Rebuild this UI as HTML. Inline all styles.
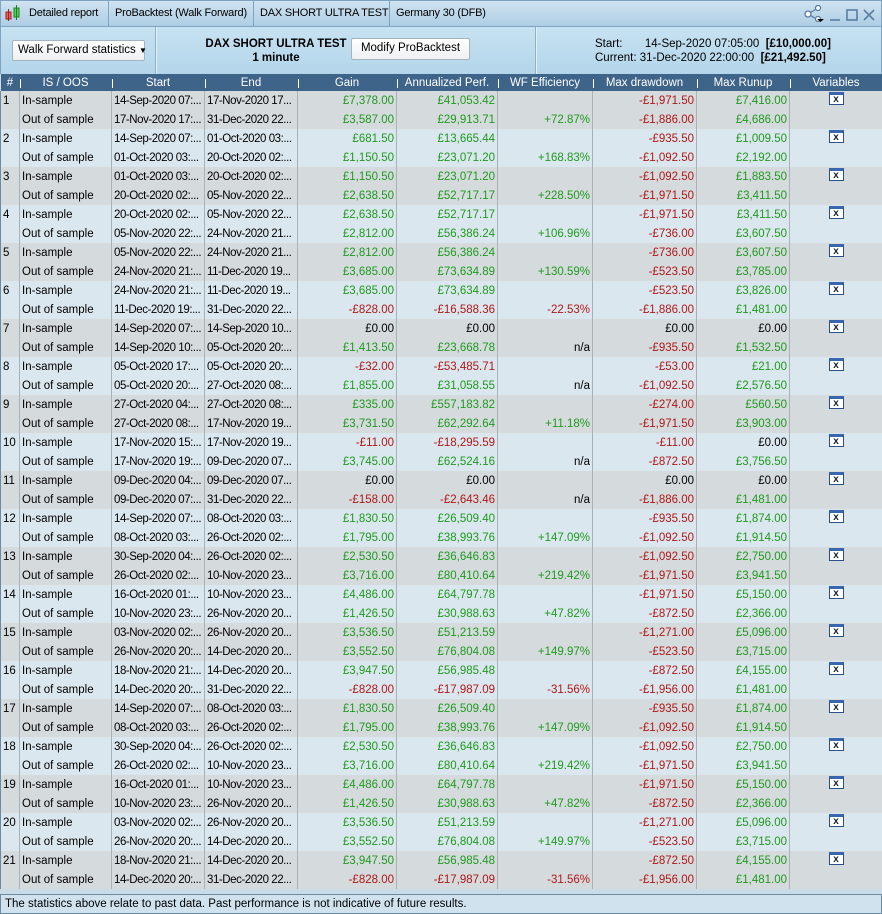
<!DOCTYPE html>
<html><head><meta charset="utf-8"><style>
*{box-sizing:border-box;margin:0;padding:0}
body{width:882px;height:914px;overflow:hidden;font-family:"Liberation Sans",Arial,sans-serif;font-size:11px;color:#000;background:#c9dbe6;position:relative}
#tb{position:absolute;left:0;top:0;width:882px;height:27px;background:linear-gradient(#cfe3f1,#aecde4);border:1px solid #7fa3c0}
#tb .t{position:absolute;top:0;height:25px;line-height:25px;border-right:1px solid #7fa3c0;padding-left:6px;white-space:nowrap;font-size:11px;letter-spacing:-0.2px;overflow:hidden}
#bar{position:absolute;left:0;top:27px;width:882px;height:47px;background:linear-gradient(#c7e2f2,#b3d5ea);border-left:1px solid #7fa3c0;border-right:1px solid #7fa3c0}
.sep{position:absolute;top:0;width:2px;height:47px;border-left:1px solid #8fb0c8;border-right:1px solid #e5f1f8}
.btn{position:absolute;background:linear-gradient(#fff,#eef0f2);border:1px solid #a5b3bf;border-radius:2px;text-align:center;line-height:19px;white-space:nowrap;font-size:11.5px}
table{position:absolute;left:0;top:74px;border-collapse:collapse;table-layout:fixed;width:882px}
th{background:#3e648a;color:#fff;font-weight:normal;height:17px;padding:0;text-align:center;position:relative;white-space:nowrap;font-size:11.5px}
th+th:before{content:"";position:absolute;left:0;top:5px;height:9px;border-left:1px solid #fff}
td{height:19px;padding:0 2px;white-space:nowrap;overflow:hidden;border-left:1px solid #a8b2b8;font-size:11.5px}
td:nth-child(3),td:nth-child(4){font-size:11.5px;letter-spacing:-0.45px;padding-left:2px}
td:first-child{border-left:1px solid #6d8aa3;padding-left:2px}
td:last-child{border-right:1px solid #6d8aa3}
tr.a td{background:#d5dadd}tr.b td{background:#dbe7ee}
.r{text-align:right}.g{color:#1f9a1f}.d{color:#b01818}.c{text-align:center}
.x{display:inline-block;width:15px;height:13px;border:1px solid #2a4f8a;border-top:3px solid #3a66b0;background:#fff;font-size:10px;line-height:9px;color:#123;font-weight:bold;vertical-align:middle;text-align:center;margin-top:-3px}
#ft{position:absolute;left:0;top:894px;width:882px;height:20px;background:#cfe2ee;border:1px solid #6d8aa3;padding-left:4px;line-height:18px;font-size:11.5px}
</style></head><body>
<div id="tb">
<svg style="position:absolute;left:4px;top:4px" width="16" height="17"><rect x="1" y="7" width="5" height="7" fill="#f06060" stroke="#a02020"/><line x1="3.5" y1="4" x2="3.5" y2="16" stroke="#a02020"/><rect x="9" y="3" width="5" height="9" fill="#50d050" stroke="#208020"/><line x1="11.5" y1="0" x2="11.5" y2="15" stroke="#208020"/></svg>
<div class="t" style="left:22px;width:86px">Detailed report</div>
<div class="t" style="left:108px;width:145px">ProBacktest (Walk Forward)</div>
<div class="t" style="left:253px;width:136px">DAX SHORT ULTRA TEST</div>
<div class="t" style="left:389px;border:none">Germany 30 (DFB)</div>
<svg style="position:absolute;left:803px;top:4px" width="76" height="18"><g stroke="#5a7ea0" fill="#fff" stroke-width="1.3"><line x1="4" y1="9" x2="14" y2="3"/><line x1="4" y1="9" x2="14" y2="15"/><circle cx="4" cy="9" r="3"/><circle cx="14" cy="3" r="2.5"/><circle cx="14" cy="14" r="2.5"/></g><path d="M13 14h7l-3.5 3z" fill="#000"/><g stroke="#5a7ea0" stroke-width="1.6" fill="none"><line x1="26" y1="15" x2="36" y2="15"/><rect x="43" y="5" width="10" height="10"/><path d="M60 5l10 10M70 5l-10 10"/></g></svg>
</div>
<div id="bar">
<div class="btn" style="left:11px;top:13px;width:133px;height:21px;text-align:left;padding-left:5px">Walk Forward statistics <span style="font-size:8px">&#9660;</span></div>
<div class="sep" style="left:154px"></div>
<div style="position:absolute;left:195px;top:10px;width:160px;text-align:center;font-weight:bold;line-height:14px;font-size:11.5px">DAX SHORT ULTRA TEST<br>1 minute</div>
<div class="btn" style="left:350px;top:11px;width:119px;height:22px">Modify ProBacktest</div>
<div class="sep" style="left:534px"></div>
<div style="position:absolute;left:594px;top:10px;line-height:14px;font-size:11.5px;white-space:nowrap">Start:&nbsp;&nbsp;&nbsp;&nbsp;&nbsp;&nbsp;&nbsp;14-Sep-2020 07:05:00 &nbsp;<b>[£10,000.00]</b><br>Current:&nbsp;31-Dec-2020 22:00:00 &nbsp;<b>[£21,492.50]</b></div>
</div>
<table>
<colgroup><col style="width:19px"><col style="width:92px"><col style="width:93px"><col style="width:93px"><col style="width:99px"><col style="width:101px"><col style="width:95px"><col style="width:104px"><col style="width:93px"><col style="width:93px"></colgroup>
<tr><th>#</th><th>IS / OOS</th><th>Start</th><th>End</th><th>Gain</th><th>Annualized Perf.</th><th>WF Efficiency</th><th>Max drawdown</th><th>Max Runup</th><th>Variables</th></tr>
<tr class="a"><td>1</td><td>In-sample</td><td>14-Sep-2020 07:...</td><td>17-Nov-2020 17...</td><td class="r g">£7,378.00</td><td class="r g">£41,053.42</td><td></td><td class="r d">-£1,971.50</td><td class="r g">£7,416.00</td><td class="c"><span class="x">x</span></td></tr>
<tr class="a"><td></td><td>Out of sample</td><td>17-Nov-2020 17:...</td><td>31-Dec-2020 22...</td><td class="r g">£3,587.00</td><td class="r g">£29,913.71</td><td class="r g">+72.87%</td><td class="r d">-£1,886.00</td><td class="r g">£4,686.00</td><td></td></tr>
<tr class="b"><td>2</td><td>In-sample</td><td>14-Sep-2020 07:...</td><td>01-Oct-2020 03:...</td><td class="r g">£681.50</td><td class="r g">£13,665.44</td><td></td><td class="r d">-£935.50</td><td class="r g">£1,009.50</td><td class="c"><span class="x">x</span></td></tr>
<tr class="b"><td></td><td>Out of sample</td><td>01-Oct-2020 03:...</td><td>20-Oct-2020 02:...</td><td class="r g">£1,150.50</td><td class="r g">£23,071.20</td><td class="r g">+168.83%</td><td class="r d">-£1,092.50</td><td class="r g">£2,192.00</td><td></td></tr>
<tr class="a"><td>3</td><td>In-sample</td><td>01-Oct-2020 03:...</td><td>20-Oct-2020 02:...</td><td class="r g">£1,150.50</td><td class="r g">£23,071.20</td><td></td><td class="r d">-£1,092.50</td><td class="r g">£1,883.50</td><td class="c"><span class="x">x</span></td></tr>
<tr class="a"><td></td><td>Out of sample</td><td>20-Oct-2020 02:...</td><td>05-Nov-2020 22...</td><td class="r g">£2,638.50</td><td class="r g">£52,717.17</td><td class="r g">+228.50%</td><td class="r d">-£1,971.50</td><td class="r g">£3,411.50</td><td></td></tr>
<tr class="b"><td>4</td><td>In-sample</td><td>20-Oct-2020 02:...</td><td>05-Nov-2020 22...</td><td class="r g">£2,638.50</td><td class="r g">£52,717.17</td><td></td><td class="r d">-£1,971.50</td><td class="r g">£3,411.50</td><td class="c"><span class="x">x</span></td></tr>
<tr class="b"><td></td><td>Out of sample</td><td>05-Nov-2020 22:...</td><td>24-Nov-2020 21...</td><td class="r g">£2,812.00</td><td class="r g">£56,386.24</td><td class="r g">+106.96%</td><td class="r d">-£736.00</td><td class="r g">£3,607.50</td><td></td></tr>
<tr class="a"><td>5</td><td>In-sample</td><td>05-Nov-2020 22:...</td><td>24-Nov-2020 21...</td><td class="r g">£2,812.00</td><td class="r g">£56,386.24</td><td></td><td class="r d">-£736.00</td><td class="r g">£3,607.50</td><td class="c"><span class="x">x</span></td></tr>
<tr class="a"><td></td><td>Out of sample</td><td>24-Nov-2020 21:...</td><td>11-Dec-2020 19...</td><td class="r g">£3,685.00</td><td class="r g">£73,634.89</td><td class="r g">+130.59%</td><td class="r d">-£523.50</td><td class="r g">£3,785.00</td><td></td></tr>
<tr class="b"><td>6</td><td>In-sample</td><td>24-Nov-2020 21:...</td><td>11-Dec-2020 19...</td><td class="r g">£3,685.00</td><td class="r g">£73,634.89</td><td></td><td class="r d">-£523.50</td><td class="r g">£3,826.00</td><td class="c"><span class="x">x</span></td></tr>
<tr class="b"><td></td><td>Out of sample</td><td>11-Dec-2020 19:...</td><td>31-Dec-2020 22...</td><td class="r d">-£828.00</td><td class="r d">-£16,588.36</td><td class="r d">-22.53%</td><td class="r d">-£1,886.00</td><td class="r g">£1,481.00</td><td></td></tr>
<tr class="a"><td>7</td><td>In-sample</td><td>14-Sep-2020 07:...</td><td>14-Sep-2020 10...</td><td class="r">£0.00</td><td class="r">£0.00</td><td></td><td class="r">£0.00</td><td class="r">£0.00</td><td class="c"><span class="x">x</span></td></tr>
<tr class="a"><td></td><td>Out of sample</td><td>14-Sep-2020 10:...</td><td>05-Oct-2020 20:...</td><td class="r g">£1,413.50</td><td class="r g">£23,668.78</td><td class="r">n/a</td><td class="r d">-£935.50</td><td class="r g">£1,532.50</td><td></td></tr>
<tr class="b"><td>8</td><td>In-sample</td><td>05-Oct-2020 17:...</td><td>05-Oct-2020 20:...</td><td class="r d">-£32.00</td><td class="r d">-£53,485.71</td><td></td><td class="r d">-£53.00</td><td class="r g">£21.00</td><td class="c"><span class="x">x</span></td></tr>
<tr class="b"><td></td><td>Out of sample</td><td>05-Oct-2020 20:...</td><td>27-Oct-2020 08:...</td><td class="r g">£1,855.00</td><td class="r g">£31,058.55</td><td class="r">n/a</td><td class="r d">-£1,092.50</td><td class="r g">£2,576.50</td><td></td></tr>
<tr class="a"><td>9</td><td>In-sample</td><td>27-Oct-2020 04:...</td><td>27-Oct-2020 08:...</td><td class="r g">£335.00</td><td class="r g">£557,183.82</td><td></td><td class="r d">-£274.00</td><td class="r g">£560.50</td><td class="c"><span class="x">x</span></td></tr>
<tr class="a"><td></td><td>Out of sample</td><td>27-Oct-2020 08:...</td><td>17-Nov-2020 19...</td><td class="r g">£3,731.50</td><td class="r g">£62,292.64</td><td class="r g">+11.18%</td><td class="r d">-£1,971.50</td><td class="r g">£3,903.00</td><td></td></tr>
<tr class="b"><td>10</td><td>In-sample</td><td>17-Nov-2020 15:...</td><td>17-Nov-2020 19...</td><td class="r d">-£11.00</td><td class="r d">-£18,295.59</td><td></td><td class="r d">-£11.00</td><td class="r">£0.00</td><td class="c"><span class="x">x</span></td></tr>
<tr class="b"><td></td><td>Out of sample</td><td>17-Nov-2020 19:...</td><td>09-Dec-2020 07...</td><td class="r g">£3,745.00</td><td class="r g">£62,524.16</td><td class="r">n/a</td><td class="r d">-£872.50</td><td class="r g">£3,756.50</td><td></td></tr>
<tr class="a"><td>11</td><td>In-sample</td><td>09-Dec-2020 04:...</td><td>09-Dec-2020 07...</td><td class="r">£0.00</td><td class="r">£0.00</td><td></td><td class="r">£0.00</td><td class="r">£0.00</td><td class="c"><span class="x">x</span></td></tr>
<tr class="a"><td></td><td>Out of sample</td><td>09-Dec-2020 07:...</td><td>31-Dec-2020 22...</td><td class="r d">-£158.00</td><td class="r d">-£2,643.46</td><td class="r">n/a</td><td class="r d">-£1,886.00</td><td class="r g">£1,481.00</td><td></td></tr>
<tr class="b"><td>12</td><td>In-sample</td><td>14-Sep-2020 07:...</td><td>08-Oct-2020 03:...</td><td class="r g">£1,830.50</td><td class="r g">£26,509.40</td><td></td><td class="r d">-£935.50</td><td class="r g">£1,874.00</td><td class="c"><span class="x">x</span></td></tr>
<tr class="b"><td></td><td>Out of sample</td><td>08-Oct-2020 03:...</td><td>26-Oct-2020 02:...</td><td class="r g">£1,795.00</td><td class="r g">£38,993.76</td><td class="r g">+147.09%</td><td class="r d">-£1,092.50</td><td class="r g">£1,914.50</td><td></td></tr>
<tr class="a"><td>13</td><td>In-sample</td><td>30-Sep-2020 04:...</td><td>26-Oct-2020 02:...</td><td class="r g">£2,530.50</td><td class="r g">£36,646.83</td><td></td><td class="r d">-£1,092.50</td><td class="r g">£2,750.00</td><td class="c"><span class="x">x</span></td></tr>
<tr class="a"><td></td><td>Out of sample</td><td>26-Oct-2020 02:...</td><td>10-Nov-2020 23...</td><td class="r g">£3,716.00</td><td class="r g">£80,410.64</td><td class="r g">+219.42%</td><td class="r d">-£1,971.50</td><td class="r g">£3,941.50</td><td></td></tr>
<tr class="b"><td>14</td><td>In-sample</td><td>16-Oct-2020 01:...</td><td>10-Nov-2020 23...</td><td class="r g">£4,486.00</td><td class="r g">£64,797.78</td><td></td><td class="r d">-£1,971.50</td><td class="r g">£5,150.00</td><td class="c"><span class="x">x</span></td></tr>
<tr class="b"><td></td><td>Out of sample</td><td>10-Nov-2020 23:...</td><td>26-Nov-2020 20...</td><td class="r g">£1,426.50</td><td class="r g">£30,988.63</td><td class="r g">+47.82%</td><td class="r d">-£872.50</td><td class="r g">£2,366.00</td><td></td></tr>
<tr class="a"><td>15</td><td>In-sample</td><td>03-Nov-2020 02:...</td><td>26-Nov-2020 20...</td><td class="r g">£3,536.50</td><td class="r g">£51,213.59</td><td></td><td class="r d">-£1,271.00</td><td class="r g">£5,096.00</td><td class="c"><span class="x">x</span></td></tr>
<tr class="a"><td></td><td>Out of sample</td><td>26-Nov-2020 20:...</td><td>14-Dec-2020 20...</td><td class="r g">£3,552.50</td><td class="r g">£76,804.08</td><td class="r g">+149.97%</td><td class="r d">-£523.50</td><td class="r g">£3,715.00</td><td></td></tr>
<tr class="b"><td>16</td><td>In-sample</td><td>18-Nov-2020 21:...</td><td>14-Dec-2020 20...</td><td class="r g">£3,947.50</td><td class="r g">£56,985.48</td><td></td><td class="r d">-£872.50</td><td class="r g">£4,155.00</td><td class="c"><span class="x">x</span></td></tr>
<tr class="b"><td></td><td>Out of sample</td><td>14-Dec-2020 20:...</td><td>31-Dec-2020 22...</td><td class="r d">-£828.00</td><td class="r d">-£17,987.09</td><td class="r d">-31.56%</td><td class="r d">-£1,956.00</td><td class="r g">£1,481.00</td><td></td></tr>
<tr class="a"><td>17</td><td>In-sample</td><td>14-Sep-2020 07:...</td><td>08-Oct-2020 03:...</td><td class="r g">£1,830.50</td><td class="r g">£26,509.40</td><td></td><td class="r d">-£935.50</td><td class="r g">£1,874.00</td><td class="c"><span class="x">x</span></td></tr>
<tr class="a"><td></td><td>Out of sample</td><td>08-Oct-2020 03:...</td><td>26-Oct-2020 02:...</td><td class="r g">£1,795.00</td><td class="r g">£38,993.76</td><td class="r g">+147.09%</td><td class="r d">-£1,092.50</td><td class="r g">£1,914.50</td><td></td></tr>
<tr class="b"><td>18</td><td>In-sample</td><td>30-Sep-2020 04:...</td><td>26-Oct-2020 02:...</td><td class="r g">£2,530.50</td><td class="r g">£36,646.83</td><td></td><td class="r d">-£1,092.50</td><td class="r g">£2,750.00</td><td class="c"><span class="x">x</span></td></tr>
<tr class="b"><td></td><td>Out of sample</td><td>26-Oct-2020 02:...</td><td>10-Nov-2020 23...</td><td class="r g">£3,716.00</td><td class="r g">£80,410.64</td><td class="r g">+219.42%</td><td class="r d">-£1,971.50</td><td class="r g">£3,941.50</td><td></td></tr>
<tr class="a"><td>19</td><td>In-sample</td><td>16-Oct-2020 01:...</td><td>10-Nov-2020 23...</td><td class="r g">£4,486.00</td><td class="r g">£64,797.78</td><td></td><td class="r d">-£1,971.50</td><td class="r g">£5,150.00</td><td class="c"><span class="x">x</span></td></tr>
<tr class="a"><td></td><td>Out of sample</td><td>10-Nov-2020 23:...</td><td>26-Nov-2020 20...</td><td class="r g">£1,426.50</td><td class="r g">£30,988.63</td><td class="r g">+47.82%</td><td class="r d">-£872.50</td><td class="r g">£2,366.00</td><td></td></tr>
<tr class="b"><td>20</td><td>In-sample</td><td>03-Nov-2020 02:...</td><td>26-Nov-2020 20...</td><td class="r g">£3,536.50</td><td class="r g">£51,213.59</td><td></td><td class="r d">-£1,271.00</td><td class="r g">£5,096.00</td><td class="c"><span class="x">x</span></td></tr>
<tr class="b"><td></td><td>Out of sample</td><td>26-Nov-2020 20:...</td><td>14-Dec-2020 20...</td><td class="r g">£3,552.50</td><td class="r g">£76,804.08</td><td class="r g">+149.97%</td><td class="r d">-£523.50</td><td class="r g">£3,715.00</td><td></td></tr>
<tr class="a"><td>21</td><td>In-sample</td><td>18-Nov-2020 21:...</td><td>14-Dec-2020 20...</td><td class="r g">£3,947.50</td><td class="r g">£56,985.48</td><td></td><td class="r d">-£872.50</td><td class="r g">£4,155.00</td><td class="c"><span class="x">x</span></td></tr>
<tr class="a"><td></td><td>Out of sample</td><td>14-Dec-2020 20:...</td><td>31-Dec-2020 22...</td><td class="r d">-£828.00</td><td class="r d">-£17,987.09</td><td class="r d">-31.56%</td><td class="r d">-£1,956.00</td><td class="r g">£1,481.00</td><td></td></tr>
</table>
<div id="ft">The statistics above relate to past data. Past performance is not indicative of future results.</div>
</body></html>
